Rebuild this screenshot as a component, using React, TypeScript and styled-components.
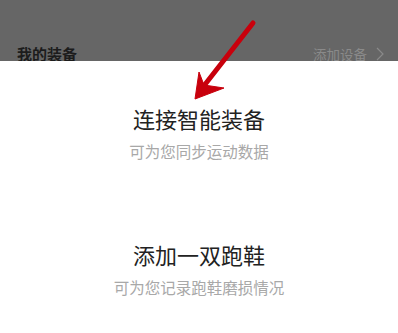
import styled, { createGlobalStyle } from "styled-components";

const GlobalStyle = createGlobalStyle`
    html, body {
        margin: 0;
        padding: 0;
        background: #666666;
        font-family: "Noto Sans CJK SC", "Noto Sans", sans-serif;
    }
`;

const Page = styled.div`
    position: relative;
    width: 398px;
    height: 333px;
    overflow: hidden;
    background: #666666;
`;

const Header = styled.div`
    display: flex;
    justify-content: space-between;
    align-items: center;
    height: 61px;
    padding: 47px 14px 0 17px;
    box-sizing: border-box;
    overflow: hidden;
`;

const HeaderTitle = styled.div`
    font-size: 15px;
    line-height: 22px;
    font-weight: 700;
    color: #1c1c1c;
`;

const HeaderLink = styled.div`
    display: flex;
    align-items: center;
    gap: 9px;
    font-size: 13.5px;
    line-height: 22px;
    color: #8a8a8a;
`;

const Sheet = styled.div`
    display: flex;
    flex-direction: column;
    background: #ffffff;
    height: 272px;
`;

const Option = styled.div`
    display: flex;
    flex-direction: column;
    align-items: center;
    height: 140px;
    padding-top: 42px;
    box-sizing: border-box;
`;

const OptionTitle = styled.div`
    font-size: 22px;
    line-height: 30px;
    color: #222222;
`;

const OptionHint = styled.div`
    margin-top: 8px;
    font-size: 15.5px;
    line-height: 20px;
    color: #a8a8a8;
`;

const Divider = styled.div`
    height: 1px;
    margin: 0 4px;
    background: linear-gradient(90deg, #f6f6f6, #e4e4e4 15%, #e4e4e4 85%, #f6f6f6);
`;

const Arrow = styled.svg`
    position: absolute;
    left: 0;
    top: 0;
    pointer-events: none;
`;

function Chevron() {
    return (
        <svg width="8" height="14" viewBox="0 0 8 14">
            <path d="M1 1 L7 7 L1 13" fill="none" stroke="#8a8a8a" strokeWidth="1.2" />
        </svg>
    );
}

export default function App() {
    return (
        <Page>
            <GlobalStyle />
            <Header>
                <HeaderTitle>我的装备</HeaderTitle>
                <HeaderLink>
                    添加设备
                    <Chevron />
                </HeaderLink>
            </Header>
            <Sheet>
                <Option>
                    <OptionTitle>连接智能装备</OptionTitle>
                    <OptionHint>可为您同步运动数据</OptionHint>
                </Option>
                <Divider />
                <Option>
                    <OptionTitle>添加一双跑鞋</OptionTitle>
                    <OptionHint>可为您记录跑鞋磨损情况</OptionHint>
                </Option>
            </Sheet>
            <Arrow width="398" height="333" viewBox="0 0 398 333">
                <line x1="253" y1="23" x2="203" y2="87" stroke="#c8000c" strokeWidth="5" strokeLinecap="round" />
                <polygon points="195,99 199,72 204,85 224,88" fill="#c8000c" stroke="#c8000c" strokeWidth="1" strokeLinejoin="round" />
            </Arrow>
        </Page>
    );
}
